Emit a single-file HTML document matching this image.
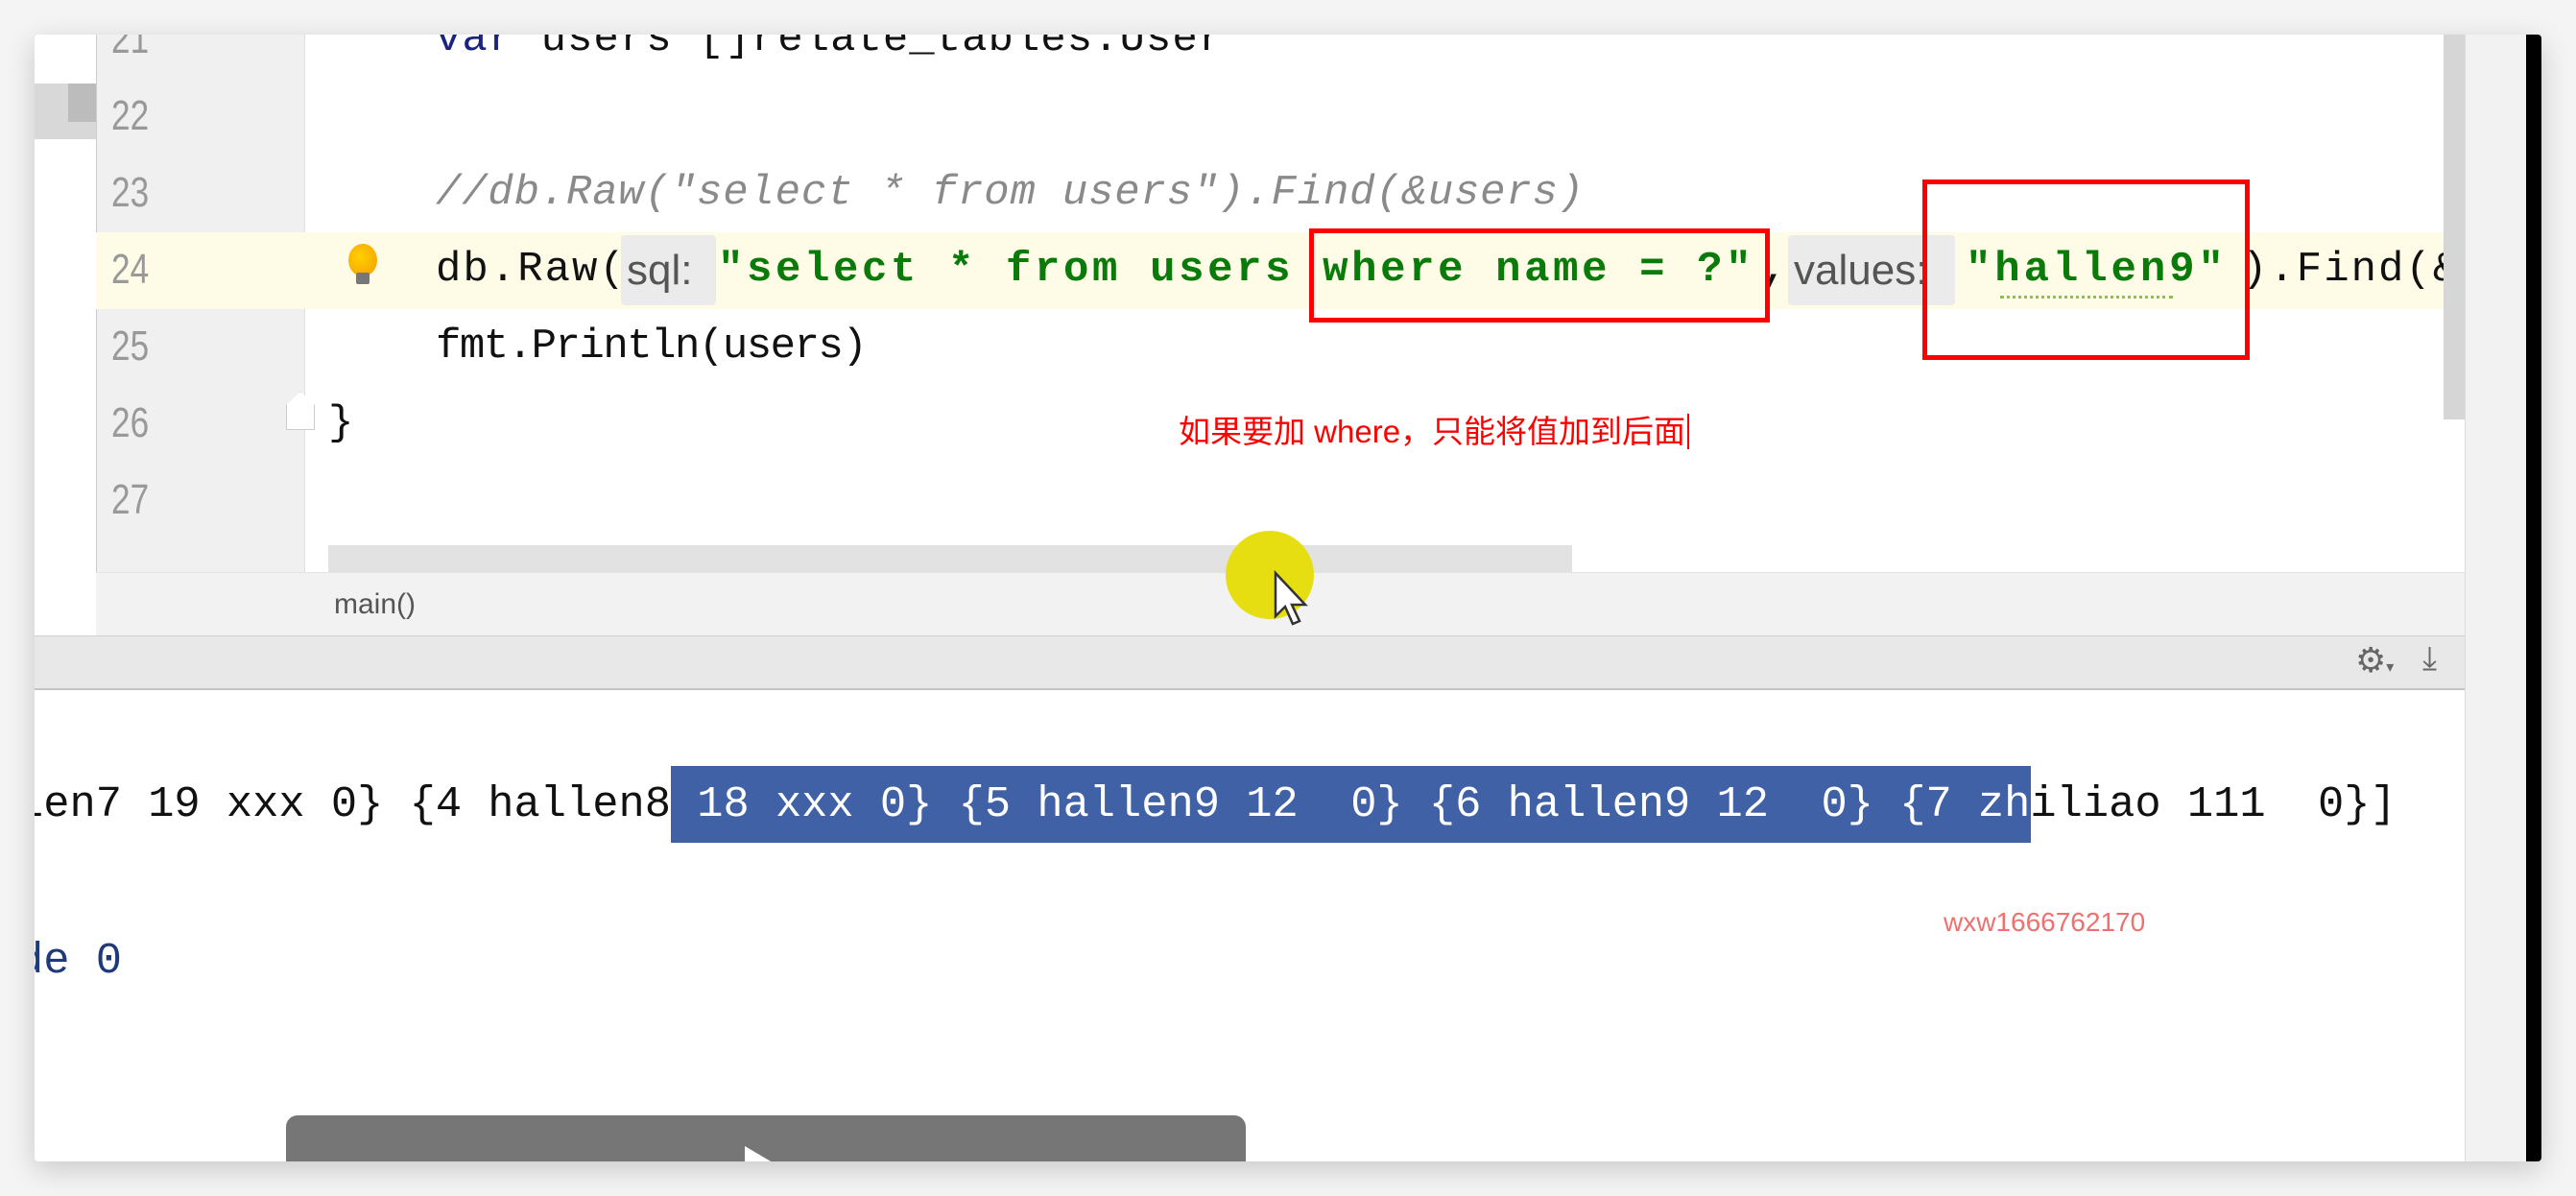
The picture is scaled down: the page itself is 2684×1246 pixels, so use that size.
<!DOCTYPE html>
<html><head><meta charset="utf-8"><style>
*{margin:0;padding:0;box-sizing:border-box}
body{width:2684px;height:1246px;background:#f4f4f4;position:relative;overflow:hidden;font-family:"Liberation Mono",monospace}
.win{position:absolute;left:36px;top:36px;width:2612px;height:1174px;background:#fff;overflow:hidden;box-shadow:0 8px 30px rgba(0,0,0,.18);border-radius:4px}
.a{position:absolute;white-space:pre}
.code{font-size:44px;line-height:80px;height:80px;color:#111}
.ln{font-size:44px;color:#999;line-height:80px;font-family:"Liberation Sans",sans-serif;transform:scaleX(.8);transform-origin:left}
.str{color:#0a7a0a;font-weight:bold}
.hint{background:#ebebeb;color:#555;font-family:"Liberation Sans",sans-serif;font-size:44px;line-height:73px;height:73px;border-radius:4px}
.red{position:absolute;border:5px solid #f00}
</style></head><body>
<div class="win">
  <div class="a" style="left:0;top:51px;width:64px;height:58px;background:#d8d8d8"></div>
  <div class="a" style="left:35px;top:51px;width:29px;height:40px;background:#bcbcbc"></div>
  <div class="a" style="left:64px;top:0;width:218px;height:626px;background:#f0f0f0;border-left:1px solid #ccc;border-right:1px solid #e0e0e0"></div>
  <div class="a" style="left:64px;top:206px;width:2468px;height:80px;background:#fefbe6"></div>
  <div class="a ln" style="left:80px;top:-35px">21</div>
  <div class="a ln" style="left:80px;top:45px">22</div>
  <div class="a ln" style="left:80px;top:125px">23</div>
  <div class="a ln" style="left:80px;top:205px">24</div>
  <div class="a ln" style="left:80px;top:285px">25</div>
  <div class="a ln" style="left:80px;top:365px">26</div>
  <div class="a ln" style="left:80px;top:445px">27</div>
  <div class="a" style="left:327px;top:218px;width:30px;height:34px;border-radius:50%;background:radial-gradient(circle at 40% 40%,#ffd000,#f59a00)"></div>
  <div class="a" style="left:335px;top:248px;width:14px;height:12px;background:#777;border-radius:2px"></div>
  <div class="a" style="left:262px;top:372px;width:30px;height:40px;background:#fff;border:1px solid #ccc;clip-path:polygon(50% 0,100% 35%,100% 100%,0 100%,0 35%)"></div>
  <div class="a code" style="left:418px;top:-35px;letter-spacing:1px"><span style="color:#1a237e">var</span> users []relate_tables.User</div>
  <div class="a code" style="left:418px;top:125px;color:#8a8a8a;font-style:italic;letter-spacing:0.8px">//db.Raw("select * from users").Find(&amp;users)</div>
  <div class="a code" style="left:418px;top:205px;letter-spacing:2px">db.Raw(</div>
  <div class="a hint" style="left:611px;top:209px;width:99px;padding-left:6px">sql:</div>
  <div class="a code str" style="left:712px;top:205px;letter-spacing:3.6px">"select * from users where name = ?"</div>
  <div class="a code" style="left:1800px;top:205px">,</div>
  <div class="a hint" style="left:1827px;top:209px;width:174px;padding-left:6px">values:</div>
  <div class="a code str" style="left:2012px;top:205px;letter-spacing:3.9px">"hallen9"</div>
  <div class="a code" style="left:2300px;top:205px;letter-spacing:2px">).Find(&amp;u</div>
  <div class="a" style="left:2048px;top:272px;width:180px;border-bottom:3px dotted #8bc34a"></div>
  <div class="a code" style="left:418px;top:285px;letter-spacing:-1.5px">fmt.Println(users)</div>
  <div class="a code" style="left:306px;top:365px">}</div>
  <div class="red" style="left:1328px;top:202px;width:480px;height:98px"></div>
  <div class="red" style="left:1967px;top:151px;width:341px;height:188px"></div>
  <div class="a" style="left:1192px;top:392px;font-family:'Liberation Sans','Noto Sans CJK SC',sans-serif;font-size:33px;color:#f00;line-height:44px">如果要加 where，只能将值加到后面<span style="border-left:2px solid #f00;margin-left:2px"></span></div>
  <div class="a" style="left:2510px;top:0;width:22px;height:401px;background:#d6d6d6"></div>
  <div class="a" style="left:2532px;top:0;width:64px;height:1174px;background:#f2f2f2;border-left:1px solid #ddd"></div>
  <div class="a" style="left:2596px;top:0;width:16px;height:1174px;background:#000"></div>
  <div class="a" style="left:306px;top:532px;width:1296px;height:28px;background:#e2e2e2"></div>
  <div class="a" style="left:64px;top:560px;width:2468px;height:66px;background:#f2f2f2;border-top:1px solid #e4e4e4"></div>
  <div class="a" style="left:312px;top:572px;font-family:'Liberation Sans',sans-serif;font-size:30px;color:#555;line-height:44px">main()</div>
  <div class="a" style="left:0;top:626px;width:2532px;height:57px;background:#e8e8e8;border-top:1px solid #d0d0d0;border-bottom:2px solid #c4c4c4"></div>
  <div class="a" style="left:2418px;top:632px;font-size:36px;color:#666;font-family:'DejaVu Sans',sans-serif">⚙<span style="font-size:16px">▾</span></div>
  <div class="a" style="left:2488px;top:630px;font-size:34px;color:#666;font-family:'DejaVu Sans',sans-serif">⤓</div>
  <div class="a" style="left:663px;top:762px;width:1417px;height:80px;background:#4061a6"></div>
  <div class="a" style="left:-18px;top:762px;font-size:45.4px;line-height:80px;color:#111;font-family:'Liberation Mono',monospace">len7 19 xxx 0} {4 hallen8<span style="color:#fff"> 18 xxx 0} {5 hallen9 12  0} {6 hallen9 12  0} {7 zh</span>iliao 111  0}]</div>
  <div class="a" style="left:-18px;top:925px;font-size:45.4px;line-height:80px;color:#1e3a7a">de 0</div>
  <div class="a" style="left:1989px;top:909px;font-family:'Liberation Sans',sans-serif;font-size:28px;color:#f07070">wxw1666762170</div>
  <div class="a" style="left:1241px;top:517px;width:92px;height:92px;border-radius:50%;background:#e6de10"></div>
  <svg class="a" style="left:1290px;top:558px" width="40" height="60" viewBox="0 0 40 60"><path d="M3 3 L3 48 L13 38 L21 56 L28 53 L20 36 L34 36 Z" fill="#fff" stroke="#333" stroke-width="2.5"/></svg>
  <div class="a" style="left:262px;top:1126px;width:1000px;height:60px;background:#767676;border-radius:12px 12px 0 0"></div>
  <div class="a" style="left:740px;top:1158px;width:0;height:0;border-left:34px solid #fff;border-top:20px solid transparent;border-bottom:20px solid transparent"></div>
</div>
</body></html>
